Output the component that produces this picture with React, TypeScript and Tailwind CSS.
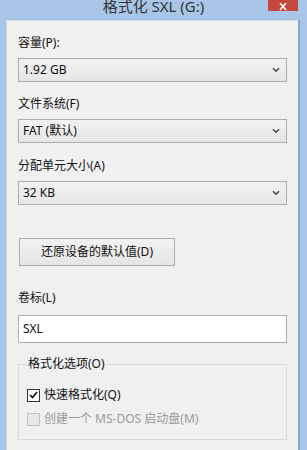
import { ReactNode } from "react";

const font = { fontFamily: '"Noto Sans", "Noto Sans CJK SC", sans-serif' };

function Chevron() {
  return (
    <svg width="8" height="6" viewBox="0 0 8 6" className="shrink-0">
      <path d="M1 1.2 L4 4.2 L7 1.2" fill="none" stroke="#4a4a4a" strokeWidth="1.6" />
    </svg>
  );
}

function ComboBox({ value }: { value: string }) {
  return (
    <div className="flex h-[24px] items-center justify-between border border-[#acacac] bg-gradient-to-b from-[#f2f2f2] to-[#e6e6e6] pl-[4px] pr-[6px] text-[12px] text-[#111]">
      <span>{value}</span>
      <Chevron />
    </div>
  );
}

function Label({ children, className }: { children: ReactNode; className: string }) {
  return <div className={`h-[16px] text-[12px] leading-[16px] text-[#111] ${className}`}>{children}</div>;
}

export default function App() {
  return (
    <div className="flex h-[450px] w-[307px] flex-col overflow-hidden bg-[#a9c6e9]" style={font}>
      {/* Title bar */}
      <div className="relative h-[20px] shrink-0">
        <div className="-mt-[4px] text-center text-[15px] leading-[20px] text-[#333]">格式化 SXL (G:)</div>
        <div className="absolute right-[9px] top-0 flex h-[11px] w-[30px] items-end justify-center bg-[#c6473f]">
          <svg width="9" height="8" viewBox="0 0 9 8">
            <path d="M1 0 L7 7 M7 0 L1 7" stroke="#fff" strokeWidth="1.6" />
          </svg>
        </div>
      </div>

      {/* Client area */}
      <div className="flex flex-1 pl-[6px]">
        <div className="flex-1 border-l border-t border-[#d6dde6] bg-[#f0f0f0] px-[11px] pt-[14px]">
          <Label className="">容量(P):</Label>
          <div className="mt-[7px]">
            <ComboBox value="1.92 GB" />
          </div>

          <Label className="mt-[14px]">文件系统(F)</Label>
          <div className="mt-[7px]">
            <ComboBox value="FAT (默认)" />
          </div>

          <Label className="mt-[15px]">分配单元大小(A)</Label>
          <div className="mt-[7px]">
            <ComboBox value="32 KB" />
          </div>

          <button
            type="button"
            className="mt-[33px] ml-[1px] flex h-[28px] w-[156px] items-center justify-center border border-[#acacac] bg-gradient-to-b from-[#f2f2f2] to-[#e5e5e5] text-[12px] text-[#111]"
          >
            还原设备的默认值(D)
          </button>

          <Label className="mt-[24px]">卷标(L)</Label>
          <div className="mt-[9px] flex h-[28px] items-center border border-[#acacac] bg-white pl-[4px] text-[12px] text-[#111]">
            SXL
          </div>

          <fieldset className="mt-[13px] h-[84px] border border-[#d9d9d9] px-[8px]">
            <legend className="px-[1px] text-[12px] leading-[16px] text-[#111]">格式化选项(O)</legend>
            <div className="mt-[15px] flex items-center gap-[4px] text-[12px] leading-[16px] text-[#111]">
              <span className="flex h-[13px] w-[13px] items-center justify-center border border-[#333] bg-white">
                <svg width="9" height="8" viewBox="0 0 9 8">
                  <path d="M1 4 L3.5 6.5 L8 1" fill="none" stroke="#111" strokeWidth="1.7" />
                </svg>
              </span>
              快速格式化(Q)
            </div>
            <div className="mt-[8px] flex items-center gap-[4px] text-[12px] leading-[16px] text-[#9a9a9a]">
              <span className="h-[13px] w-[13px] border border-[#c4c4c4] bg-[#e8e8e8]" />
              创建一个 MS-DOS 启动盘(M)
            </div>
          </fieldset>
        </div>
        <div className="w-[2px] bg-[#8aa6c9]" />
        <div className="w-[7px]" />
      </div>
    </div>
  );
}
